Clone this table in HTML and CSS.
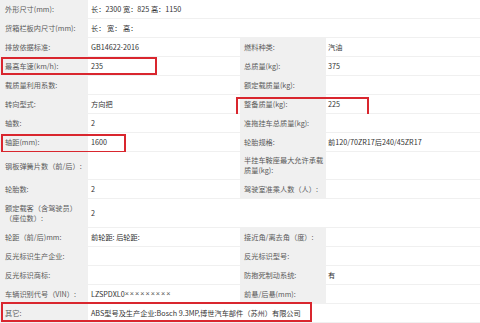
FILE: index.html
```html
<!DOCTYPE html>
<html lang="zh-CN">
<head>
<meta charset="utf-8">
<title>车辆参数</title>
<link rel="stylesheet" href="styles.css">
</head>
<body>
<div class="table">
  <div class="row">
    <div class="lbl">外形尺寸(mm):</div>
    <div class="val span3">长：2300 宽：825 高：1150</div>
  </div>
  <div class="row">
    <div class="lbl">货箱栏板内尺寸(mm):</div>
    <div class="val span3">长： 宽： 高：</div>
  </div>
  <div class="row">
    <div class="lbl">排放依据标准:</div>
    <div class="val">GB14622-2016</div>
    <div class="lbl r">燃料种类:</div>
    <div class="val r">汽油</div>
  </div>
  <div class="row">
    <div class="lbl">最高车速(km/h):</div>
    <div class="val">235</div>
    <div class="lbl r">总质量(kg):</div>
    <div class="val r">375</div>
    <span class="mark m1"></span>
  </div>
  <div class="row">
    <div class="lbl">载质量利用系数:</div>
    <div class="val"></div>
    <div class="lbl r">额定载质量(kg):</div>
    <div class="val r"></div>
  </div>
  <div class="row">
    <div class="lbl">转向型式:</div>
    <div class="val">方向把</div>
    <div class="lbl r">整备质量(kg):</div>
    <div class="val r">225</div>
    <span class="mark m2"></span>
  </div>
  <div class="row">
    <div class="lbl">轴数:</div>
    <div class="val">2</div>
    <div class="lbl r">准拖挂车总质量(kg):</div>
    <div class="val r"></div>
  </div>
  <div class="row">
    <div class="lbl">轴距(mm):</div>
    <div class="val">1600</div>
    <div class="lbl r">轮胎规格:</div>
    <div class="val r">前120/70ZR17后240/45ZR17</div>
    <span class="mark m3"></span>
  </div>
  <div class="row">
    <div class="lbl">钢板弹簧片数（前/后）:</div>
    <div class="val"></div>
    <div class="lbl r two">半挂车鞍座最大允许承载<br>质量(kg):</div>
    <div class="val r"></div>
  </div>
  <div class="row">
    <div class="lbl">轮胎数:</div>
    <div class="val">2</div>
    <div class="lbl r">驾驶室准乘人数（人）:</div>
    <div class="val r"></div>
  </div>
  <div class="row">
    <div class="lbl two2">额定载客（含驾驶员）<br>（座位数）:</div>
    <div class="val">2</div>
    <div class="val blank"></div>
  </div>
  <div class="row">
    <div class="lbl">轮距（前/后)mm:</div>
    <div class="val">前轮距: 后轮距:</div>
    <div class="lbl r">接近角/离去角（度）:</div>
    <div class="val r"></div>
  </div>
  <div class="row">
    <div class="lbl">反光标识生产企业:</div>
    <div class="val"></div>
    <div class="lbl r">反光标识型号:</div>
    <div class="val r"></div>
  </div>
  <div class="row">
    <div class="lbl">反光标识商标:</div>
    <div class="val"></div>
    <div class="lbl r">防抱死制动系统:</div>
    <div class="val r">有</div>
  </div>
  <div class="row">
    <div class="lbl">车辆识别代号（VIN）:</div>
    <div class="val">LZSPDXL0<span class="mask">×××××××××</span></div>
    <div class="lbl r">前悬/后悬(mm):</div>
    <div class="val r"></div>
  </div>
  <div class="row">
    <div class="lbl">其它:</div>
    <div class="val span3">ABS型号及生产企业:Bosch 9.3MP,博世汽车部件（苏州）有限公司</div>
    <span class="mark m4"></span>
  </div>
</div>
</body>
</html>
```
FILE: styles.css
```css
* { box-sizing: border-box; }
html, body {
  margin: 0;
  padding: 0;
  background: #fff;
}
body {
  width: 480px;
  height: 323px;
  overflow: hidden;
  font-family: "Noto Sans CJK SC", "Microsoft YaHei", sans-serif;
  font-size: 7.2px;
}
.table {
  display: flex;
  flex-direction: column;
}
.row {
  position: relative;
  display: grid;
  grid-template-columns: 88px 152px 86px 1fr;
}
.lbl, .val {
  display: flex;
  align-items: center;
  padding: 4px 0;
  line-height: 10px;
  min-height: 19px;
  border-bottom: 1px solid #f0f0f0;
  white-space: nowrap;
}
.lbl {
  background: #f0f0f0;
  color: #5a5a5a;
  padding-left: 5px;
}
.lbl.r { padding-left: 4px; }
.lbl.two { line-height: 9.5px; }
.val {
  background: #fff;
  color: #333;
  padding-left: 3px;
}
.val.r { padding-left: 2px; }
.mask {
  font-family: "Liberation Sans", Arial, sans-serif;
  letter-spacing: 1px;
  color: #555;
}
.span3 { grid-column: 2 / 5; }
.blank { grid-column: 3 / 5; }
.mark {
  position: absolute;
  border: 2px solid #d9262e;
  pointer-events: none;
}
.m1 { left: 1px; top: 0; width: 156px; height: 18px; }
.m2 { left: 236px; top: 2px; width: 133px; height: 20px; }
.m3 { left: 1px; top: 1px; width: 125px; height: 19px; }
.m4 { left: 1px; top: -2px; width: 311px; height: 20px; }
```
